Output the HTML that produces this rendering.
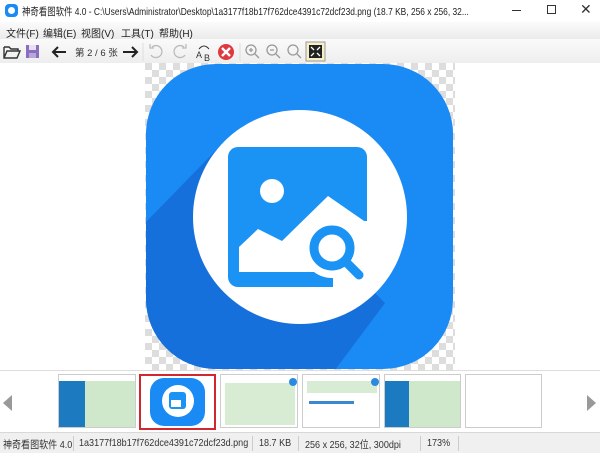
<!DOCTYPE html>
<html><head><meta charset="utf-8"><style>
*{margin:0;padding:0;box-sizing:border-box}
body{width:600px;height:453px;overflow:hidden;background:#fff;font-family:"Liberation Sans","Noto Sans CJK SC",sans-serif;position:relative;font-size:11px;color:#222}
.abs{position:absolute}
#title{top:0;left:0;width:600px;height:22px;background:#fff}
#menu{top:22px;left:0;width:600px;height:17px;background:linear-gradient(#fbfbfb,#ebebeb)}
#tool{top:39px;left:0;width:600px;height:24px;background:linear-gradient(#fafafa,#eeeeee)}
#view{top:63px;left:0;width:600px;height:307px;background:#fff}
#strip{top:370px;left:0;width:600px;height:62px;background:#fff;border-top:1px solid #ddd}
#status{top:432px;left:0;width:600px;height:21px;background:#f0f0f0;border-top:1px solid #d8d8d8;font-size:10.5px;color:#333}
#status span{transform:scaleX(0.86);transform-origin:left;white-space:nowrap}
.th{position:absolute;top:374px;height:54px;border:1px solid #ccc;background:#fff;overflow:hidden}
.sep{position:absolute;top:3px;width:1px;height:15px;background:#ccc}
</style></head><body>
<div id="title" class="abs">
 <div class="abs" style="left:5px;top:4px;width:13px;height:13px;border-radius:4px;background:#1a8af5"><div style="margin:3px;width:7px;height:7px;border-radius:50%;background:#fff"></div></div>
 <div class="abs" style="left:22px;top:4px;font-size:10.5px;white-space:nowrap;transform:scaleX(0.8);transform-origin:left">神奇看图软件 4.0 - C:\Users\Administrator\Desktop\1a3177f18b17f762dce4391c72dcf23d.png (18.7 KB, 256 x 256, 32...</div>
 <div class="abs" style="left:512px;top:10px;width:9px;height:1px;background:#333"></div>
 <div class="abs" style="left:547px;top:5px;width:9px;height:9px;border:1px solid #333"></div>
 <div class="abs" style="left:580px;top:1px;font-size:14px;color:#333">✕</div>
</div>
<div id="menu" class="abs" style="font-size:10px">
 <span class="abs" style="left:6px;top:3px">文件(F)</span>
 <span class="abs" style="left:43px;top:3px">编辑(E)</span>
 <span class="abs" style="left:81px;top:3px">视图(V)</span>
 <span class="abs" style="left:121px;top:3px">工具(T)</span>
 <span class="abs" style="left:159px;top:3px">帮助(H)</span>
</div>
<div id="tool" class="abs">
 <svg class="abs" style="left:0;top:0" width="340" height="24">
  <path d="M4 8h5l2 2h7v2M4 8v11h13l3-7H7l-3 7" fill="none" stroke="#333" stroke-width="1.4"/>
  <rect x="26" y="6" width="13" height="13" fill="#8c6ec0"/><rect x="29" y="6" width="7" height="5" fill="#e6e0f0"/><rect x="29" y="14" width="7" height="5" fill="#b7a7d8"/>
  <path d="M66 13H53M58 8l-5 5 5 5" fill="none" stroke="#222" stroke-width="2"/>
  <text x="75" y="17" font-size="9.5" font-family="Liberation Sans,Noto Sans CJK SC,sans-serif" fill="#333">第 2 / 6 张</text>
  <path d="M123 13h14M132 8l5 5-5 5" fill="none" stroke="#222" stroke-width="2"/>
  <line x1="143" y1="4" x2="143" y2="22" stroke="#ddd"/>
  <path d="M152 8a6 6 0 1 1-1 8M150 5v4h4" fill="none" stroke="#bbb" stroke-width="1.3"/>
  <path d="M184 8a6 6 0 1 0 1 8M186 5v4h-4" fill="none" stroke="#bbb" stroke-width="1.3"/>
  <text x="196" y="19" font-size="9" fill="#333">A</text><text x="204" y="22" font-size="9" fill="#333">B</text>
  <path d="M199 10q5-6 10 0" fill="none" stroke="#333"/>
  <circle cx="226" cy="13" r="8" fill="#e0383e"/><path d="M222 9l8 8M230 9l-8 8" stroke="#fff" stroke-width="2.4"/>
  <line x1="240" y1="4" x2="240" y2="22" stroke="#ddd"/>
  <circle cx="251" cy="11" r="5" fill="none" stroke="#999" stroke-width="1.3"/><path d="M255 15l4 4M249 11h4M251 9v4" stroke="#999" stroke-width="1.3"/>
  <circle cx="272" cy="11" r="5" fill="none" stroke="#999" stroke-width="1.3"/><path d="M276 15l4 4M270 11h4" stroke="#999" stroke-width="1.3"/>
  <circle cx="293" cy="11" r="5" fill="none" stroke="#999" stroke-width="1.3"/><path d="M297 15l4 4" stroke="#999" stroke-width="1.3"/>
  <rect x="306" y="3" width="19" height="19" fill="#f6efc8" stroke="#999"/>
  <rect x="309" y="6" width="13" height="13" fill="#222"/>
  <path d="M311 8l3 3M320 8l-3 3M311 17l3-3M320 17l-3-3" stroke="#fff" stroke-width="1.3"/>
 </svg>
</div>
<div id="view" class="abs">
 <svg class="abs" style="left:145px;top:0" width="310" height="307">
  <defs>
   <pattern id="ck" width="14" height="14" patternUnits="userSpaceOnUse"><rect width="14" height="14" fill="#fff"/><rect width="7" height="7" fill="#ddd"/><rect x="7" y="7" width="7" height="7" fill="#ddd"/></pattern>
   <clipPath id="rr"><rect x="1" y="1" width="307" height="305" rx="70"/></clipPath>
  </defs>
  <rect width="310" height="307" fill="url(#ck)"/>
  <g clip-path="url(#rr)">
   <rect width="310" height="307" fill="#1a8af5"/>
   <path d="M80 78L0 160L0 307L190 307L240 240Z" fill="#1570dc"/>
   <circle cx="155" cy="154" r="107" fill="#fff"/>
  </g>
  <rect x="83" y="84" width="139" height="140" rx="10" fill="#1a93f5"/>
  <circle cx="127" cy="128" r="12" fill="#fff"/>
  <path d="M94 184L113 166L137 178L183 133L222 160V209H94Z" fill="#fff"/>
  <rect x="188" y="158" width="40" height="70" fill="#fff"/>
  <circle cx="187" cy="185" r="30" fill="#fff"/>
  <circle cx="187" cy="185" r="18" fill="none" stroke="#1a93f5" stroke-width="9"/>
  <path d="M200 198l14 14" stroke="#1a93f5" stroke-width="9" stroke-linecap="round"/>
 </svg>
</div>
<div id="strip" class="abs">
 <svg class="abs" style="left:3px;top:24px" width="10" height="16"><path d="M9 0L0 8l9 8z" fill="#999"/></svg>
 <svg class="abs" style="left:587px;top:24px" width="10" height="16"><path d="M0 0l9 8-9 8z" fill="#999"/></svg>
</div>
<div class="th" style="left:58px;width:78px;background:#cfe8cc"><div style="position:absolute;left:0;top:6px;width:26px;height:48px;background:#1c7bc0"></div><div style="position:absolute;left:0;top:0;width:78px;height:6px;background:#fff"></div></div>
<div class="th" style="left:139px;width:77px;height:56px;border:2px solid #d0282e"><div style="position:absolute;left:9px;top:2px;width:55px;height:48px;border-radius:14px;background:#1a8af5"></div><div style="position:absolute;left:21px;top:9px;width:32px;height:32px;border-radius:50%;background:#fff"></div><div style="position:absolute;left:28px;top:16px;width:17px;height:17px;border-radius:3px;background:#1a93f5"></div><div style="position:absolute;left:30px;top:24px;width:10px;height:7px;background:#fff"></div></div>
<div class="th" style="left:220px;width:78px;background:#fff"><div style="position:absolute;left:4px;top:8px;width:70px;height:42px;background:#d7ecd3"></div><div style="position:absolute;left:68px;top:3px;width:8px;height:8px;border-radius:50%;background:#2a8ae0"></div></div>
<div class="th" style="left:302px;width:78px;background:#fff"><div style="position:absolute;left:4px;top:6px;width:70px;height:12px;background:#d7ecd3"></div><div style="position:absolute;left:6px;top:26px;width:45px;height:3px;background:#3b88d0"></div><div style="position:absolute;left:68px;top:3px;width:8px;height:8px;border-radius:50%;background:#2a8ae0"></div></div>
<div class="th" style="left:384px;width:77px;background:#cfe8cc"><div style="position:absolute;left:0;top:6px;width:24px;height:48px;background:#1c7bc0"></div><div style="position:absolute;left:0;top:0;width:77px;height:6px;background:#fff"></div></div>
<div class="th" style="left:465px;width:77px;background:#fff"></div>
<div id="status" class="abs">
 <span class="abs" style="left:3px;top:4px">神奇看图软件 4.0</span><div class="sep" style="left:73px"></div>
 <span class="abs" style="left:79px;top:4px">1a3177f18b17f762dce4391c72dcf23d.png</span><div class="sep" style="left:252px"></div>
 <span class="abs" style="left:259px;top:4px">18.7 KB</span><div class="sep" style="left:298px"></div>
 <span class="abs" style="left:305px;top:4px">256 x 256, 32位, 300dpi</span><div class="sep" style="left:420px"></div>
 <span class="abs" style="left:427px;top:4px">173%</span><div class="sep" style="left:458px"></div>
</div>
</body></html>
